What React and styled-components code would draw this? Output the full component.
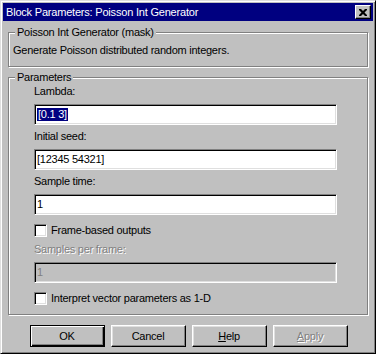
import styled, { createGlobalStyle } from 'styled-components';

const GlobalStyle = createGlobalStyle`
  html, body {
    margin: 0;
    padding: 0;
    background: #c0c0c0;
  }
  * {
    box-sizing: border-box;
  }
`;

const Window = styled.div`
  width: 376px;
  height: 354px;
  background: #c0c0c0;
  border: 1px solid;
  border-color: #dfdfdf #000 #000 #dfdfdf;
  box-shadow: inset 1px 1px #fff, inset -1px -1px #808080;
  padding: 2px;
  display: flex;
  flex-direction: column;
  font-family: "Liberation Sans", Arial, sans-serif;
  font-size: 11px;
  line-height: 13px;
  letter-spacing: -0.25px;
  color: #000;
`;

const TitleBar = styled.div`
  height: 18px;
  background: #000080;
  color: #fff;
  display: flex;
  align-items: center;
  justify-content: space-between;
  padding: 0 2px 0 3px;
  font-size: 11px;
  letter-spacing: -0.2px;
`;

const CloseButton = styled.div`
  width: 16px;
  height: 14px;
  background: #c0c0c0;
  border: 1px solid;
  border-color: #fff #000 #000 #fff;
  box-shadow: inset -1px -1px #808080;
  display: flex;
  align-items: center;
  justify-content: center;
`;

const Body = styled.div`
  flex: 1;
  padding: 5px 5px 0 5px;
  display: flex;
  flex-direction: column;
`;

const Group = styled.fieldset`
  margin: ${(p) => p.$top || 0}px 0 0 0;
  padding: 0;
  border: 1px solid #808080;
  box-shadow: inset 1px 1px #fff, 1px 1px #fff;
  min-inline-size: 0;
`;

const Legend = styled.legend`
  margin-left: 6px;
  padding: 0 2px;
  background: #c0c0c0;
  position: relative;
  line-height: 13px;
`;

const Description = styled.div`
  height: 13px;
  margin: 5px 0 9px 4px;
`;

const FieldList = styled.div`
  padding: 1px 30px 9px 25px;
`;

const Label = styled.div`
  height: 13px;
  margin-bottom: 6px;
  color: ${(p) => (p.$disabled ? '#808080' : '#000')};
  text-shadow: ${(p) => (p.$disabled ? '1px 1px #fff' : 'none')};
`;

const Input = styled.div`
  height: 21px;
  margin-bottom: 5px;
  background: ${(p) => (p.$disabled ? '#c0c0c0' : '#fff')};
  color: ${(p) => (p.$disabled ? '#808080' : '#000')};
  border: 1px solid;
  border-color: #808080 #fff #fff #808080;
  box-shadow: inset 1px 1px #000, inset -1px -1px #dfdfdf;
  padding: 0 3px 0 2px;
  display: flex;
  align-items: center;
  white-space: pre;
`;

const Selected = styled.span`
  background: #000080;
  color: #fff;
  padding: 0 1px;
`;

const CheckRow = styled.div`
  display: flex;
  align-items: center;
  height: 13px;
  gap: 4px;
  margin: ${(p) => p.$margin};
`;

const CheckBox = styled.div`
  width: 13px;
  height: 13px;
  background: #fff;
  border: 1px solid;
  border-color: #808080 #fff #fff #808080;
  box-shadow: inset 1px 1px #000, inset -1px -1px #dfdfdf;
`;

const ButtonRow = styled.div`
  display: flex;
  justify-content: center;
  gap: 6px;
  margin-top: 10px;
  padding-left: 1px;
`;

const Button = styled.div`
  width: 75px;
  height: 22px;
  display: flex;
  align-items: center;
  justify-content: center;
  background: #c0c0c0;
  border: 1px solid;
  border-color: ${(p) => (p.$default ? '#000' : '#fff #000 #000 #fff')};
  box-shadow: ${(p) =>
    p.$default
      ? 'inset 1px 1px #fff, inset -1px -1px #000, inset -2px -2px #808080'
      : 'inset -1px -1px #808080, inset 1px 1px #dfdfdf'};
  color: ${(p) => (p.$disabled ? '#808080' : '#000')};
  text-shadow: ${(p) => (p.$disabled ? '1px 1px #fff' : 'none')};
`;

const Key = styled.span`
  text-decoration: underline;
`;

const Field = ({ label, children, disabled }) => (
  <>
    <Label $disabled={disabled}>{label}</Label>
    <Input $disabled={disabled}>{children}</Input>
  </>
);

export default function App() {
  return (
    <>
      <GlobalStyle />
      <Window>
        <TitleBar>
          <span>Block Parameters: Poisson Int Generator</span>
          <CloseButton>
            <svg width="8" height="7" viewBox="0 0 8 7">
              <path d="M0 0h2l2 2 2-2h2v1L5.5 3.5 8 6v1H6L4 5 2 7H0V6l2.5-2.5L0 1z" fill="#000" />
            </svg>
          </CloseButton>
        </TitleBar>
        <Body>
          <Group>
            <Legend>Poisson Int Generator (mask)</Legend>
            <Description>Generate Poisson distributed random integers.</Description>
          </Group>
          <Group $top={4}>
            <Legend>Parameters</Legend>
            <FieldList>
              <Field label="Lambda:">
                <Selected>[0.1 3]</Selected>
              </Field>
              <Field label="Initial seed:">[12345 54321]</Field>
              <Field label="Sample time:">1</Field>
              <CheckRow $margin="9px 0 6px 0">
                <CheckBox />
                <span>Frame-based outputs</span>
              </CheckRow>
              <Field label="Samples per frame:" disabled>1</Field>
              <CheckRow $margin="9px 0 0 0">
                <CheckBox />
                <span>Interpret vector parameters as 1-D</span>
              </CheckRow>
            </FieldList>
          </Group>
          <ButtonRow>
            <Button $default>OK</Button>
            <Button>Cancel</Button>
            <Button><span><Key>H</Key>elp</span></Button>
            <Button $disabled><span><Key>A</Key>pply</span></Button>
          </ButtonRow>
        </Body>
      </Window>
    </>
  );
}
